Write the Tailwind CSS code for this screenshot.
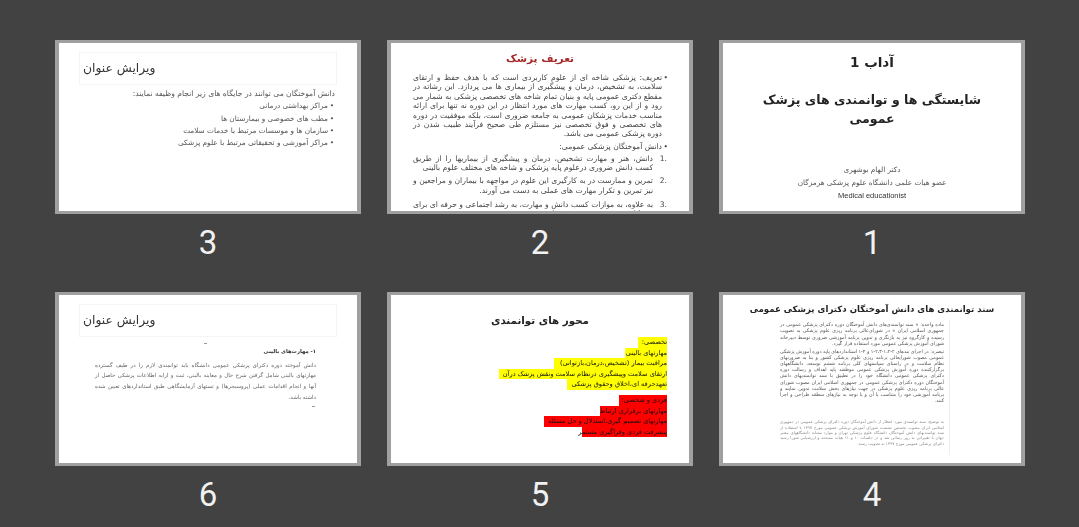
<!DOCTYPE html>
<html lang="fa">
<head>
<meta charset="utf-8">
<script src="https://cdn.jsdelivr.net/npm/@tailwindcss/browser@4"></script>
</head>
<body class="bg-[#424242] overflow-hidden font-['DejaVu_Sans',sans-serif]">
<div class="w-[1079px] h-[527px] pt-[40px] pl-[55px]">
  <div dir="rtl" class="grid grid-cols-[repeat(3,306px)] gap-x-[26px] w-[970px]">

    <!-- 1 -->
    <div class="flex flex-col">
      <div class="h-[174px] border-x-4 border-y-3 border-[#a0a0a0] bg-white overflow-hidden text-center">
        <div class="blur-[0.3px]">
          <div class="mt-[8px] text-[13.5px] font-bold leading-[22px] text-[#222]">آداب 1</div>
          <div class="mt-[17px] px-[30px] text-[12.5px] font-bold leading-[19px] text-[#222]">شایستگی ها و توانمندی های پزشک عمومی</div>
          <div class="mt-[36px] text-[7.3px] leading-[12.5px] text-[#555]">دکتر الهام بوشهری</div>
          <div class="text-[7.3px] leading-[12.5px] text-[#555]">عضو هیات علمی دانشگاه علوم پزشکی هرمزگان</div>
          <div class="text-[7.5px] leading-[13px] text-[#333] font-['Liberation_Sans',sans-serif]">Medical educationist</div>
        </div>
      </div>
      <div class="h-[78px] pt-[9px] text-center text-[33px] leading-[40px] text-[#f2f2f2] font-['Roboto',sans-serif]">1</div>
    </div>

    <!-- 2 -->
    <div class="flex flex-col">
      <div class="h-[174px] border-x-4 border-y-3 border-[#a0a0a0] bg-white overflow-hidden">
        <div class="blur-[0.3px]">
          <div class="mt-[5px] h-[20px] text-center text-[10.5px] font-bold leading-[20px] text-[#a62a2a]">تعریف پزشک</div>
          <div class="pr-[27px] pl-[22px] mt-[5px] text-[7.6px] leading-[9.4px] text-[#444]">
            <p class="relative text-justify"><span class="absolute right-[-6px]">•</span>تعریف: پزشکی شاخه ای از علوم کاربردی است که با هدف حفظ و ارتقای سلامت، به تشخیص، درمان و پیشگیری از بیماری ها می پردازد. این رشاته در مقطع دکتری عمومی پایه و بنیان تمام شاخه های تخصصی پزشکی به شمار می رود و از این رو، کسب مهارت های مورد انتظار در این دوره نه تنها برای ارائه مناسب خدمات پزشکان عمومی به جامعه ضروری است، بلکه موفقیت در دوره های تخصصی و فوق تخصصی نیز مستلزم طی صحیح فرآیند طبیب شدن در دوره پزشکی عمومی می باشد.</p>
            <p class="relative mt-[3.6px]"><span class="absolute right-[-6px]">•</span>دانش آموختگان پزشکی عمومی:</p>
            <p class="relative mt-[1.8px] mr-[9px] text-justify"><span dir="ltr" class="absolute right-[-14px]">1.</span>دانش، هنر و مهارت تشخیص، درمان و پیشگیری از بیماریها را از طریق کسب دانش ضروری درعلوم پایه پزشکی و شاخه های مختلف علوم بالینی</p>
            <p class="relative mt-[3.8px] mr-[9px] text-justify"><span dir="ltr" class="absolute right-[-14px]">2.</span>تمرین و ممارست در به کارگیری این علوم در مواجهه با بیماران و مراجعین و نیز تمرین و تکرار مهارت های عملی به دست می آورند.</p>
            <p class="relative mt-[4.6px] mr-[9px] text-justify"><span dir="ltr" class="absolute right-[-14px]">3.</span>به علاوه، به موازات کسب دانش و مهارت، به رشد اجتماعی و حرفه ای برای پزشکان عمومی نیز دست می یابند و</p>
          </div>
        </div>
      </div>
      <div class="h-[78px] pt-[9px] text-center text-[33px] leading-[40px] text-[#f2f2f2] font-['Roboto',sans-serif]">2</div>
    </div>

    <!-- 3 -->
    <div class="flex flex-col">
      <div class="h-[174px] border-x-4 border-y-3 border-[#a0a0a0] bg-white overflow-hidden">
        <div class="blur-[0.3px]">
          <div class="mt-[9px] mr-[20px] w-[258px] h-[33px] border border-[#f4f4f4] pl-[3px] flex items-center justify-end text-[12.3px] text-[#333]">ویرایش عنوان</div>
          <div class="mt-[3px] pr-[22px] text-[7.3px] leading-[12.3px] text-[#555]">
            <p class="text-[7.6px]">دانش آموختگان می توانند در جایگاه های زیر انجام وظیفه نمایند:</p>
            <p class="relative mr-[7px]"><span class="absolute right-[-6px]">•</span>مراکز بهداشتی درمانی</p>
            <p class="relative mr-[7px]"><span class="absolute right-[-6px]">•</span>مطب های خصوصی و بیمارستان ها</p>
            <p class="relative mr-[7px]"><span class="absolute right-[-6px]">•</span>سازمان ها و موسسات مرتبط با خدمات سلامت</p>
            <p class="relative mr-[7px]"><span class="absolute right-[-6px]">•</span>مراکز آموزشی و تحقیقاتی مرتبط با علوم پزشکی</p>
          </div>
        </div>
      </div>
      <div class="h-[78px] pt-[9px] text-center text-[33px] leading-[40px] text-[#f2f2f2] font-['Roboto',sans-serif]">3</div>
    </div>

    <!-- 4 -->
    <div class="flex flex-col">
      <div class="h-[174px] border-x-4 border-y-3 border-[#a0a0a0] bg-white overflow-hidden">
        <div class="blur-[0.3px]">
          <div class="mt-[6px] h-[16px] text-center text-[8.6px] font-bold leading-[16px] text-[#222] whitespace-nowrap">سند توانمندی های دانش آموختگان دکترای پزشکی عمومی</div>
        </div>
        <div class="mr-[71px] w-[170px] h-[135px] mt-[3px] border-r border-[#eeeeee] pr-[5px] blur-[0.5px] text-[4.8px] text-[#555]">
          <p class="pt-[2px] leading-[6.4px] text-justify">ماده واحده: « سند توانمندی‌های دانش آموختگان دوره دکترای پزشکی عمومی در جمهوری اسلامی ایران » در شورای‌عالی برنامه ریزی علوم پزشکی به تصویب رسیده و کارگروه نیز به بازنگری و تدوین برنامه آموزشی ضروری توسط دبیرخانه شورای آموزش پزشکی عمومی مورد استفاده قرار گیرد.</p>
          <p class="mt-[1px] leading-[6.2px] text-justify">تبصره: در اجرای بندهای ۲-۱،۲-۲،۳-۱ و ۴-۱ استانداردهای پایه دوره آموزش پزشکی عمومی مصوب شورایعالی برنامه ریزی علوم پزشکی کشور و بنا به ضرورتهای نظام سلامت و در راستای سیاستهای کلی برنامه ششم توسعه، دانشگاههای برگزارکننده دوره آموزش پزشکی عمومی موظفند پایه اهداف و رسالت دوره دکترای پزشکی عمومی دانشگاه خود را در تطبیق با سند توانمندیهای دانش آموختگان دوره دکترای پزشکی عمومی در جمهوری اسلامی ایران مصوب شورای عالی برنامه ریزی علوم پزشکی در جهت نیازهای بخش سلامت تدوین نمایند و برنامه آموزشی خود را متناسب با آن و با توجه به نیازهای منطقه طراحی و اجرا کنند.</p>
          <p class="mt-[15px] text-[4px] leading-[5.3px] text-justify text-[#888]">به توضیح: سند توانمندی مورد انتظار از دانش آموختگان دوره دکترای پزشکی عمومی در جمهوری اسلامی ایران مصوب نخستین نشست شورای آموزش پزشکی عمومی مورخ ۱۳۹۷ با استفاده از سند توانمندیهای دانش آموختگان دانشگاه علوم پزشکی تهران و موارد مشابه دانشگاههای معتبر جهان با تغییراتی به روز رسانی شد و در جلسات ۱۰ و ۱۱ هیات ممتحنه و ارزشیابی شورا رسید دکترای پزشکی عمومی مورخ ۱۳۹۷ به تصویب رسید.</p>
        </div>
      </div>
      <div class="h-[78px] pt-[9px] text-center text-[33px] leading-[40px] text-[#f2f2f2] font-['Roboto',sans-serif]">4</div>
    </div>

    <!-- 5 -->
    <div class="flex flex-col">
      <div class="h-[174px] border-x-4 border-y-3 border-[#a0a0a0] bg-white overflow-hidden">
        <div class="blur-[0.3px]">
          <div class="mt-[15px] h-[20px] text-center text-[10.3px] font-bold leading-[20px] text-[#222]">محور های توانمندی</div>
          <div class="mt-[7px] mr-[22px] flex flex-col items-start text-[6.6px] text-[#111]">
            <span class="h-[10.6px] leading-[10.6px] bg-[#ffff00] w-[29px] whitespace-nowrap">تخصصی:</span>
            <span class="h-[10.6px] leading-[10.6px] bg-[#ffff00] w-[42px] whitespace-nowrap">مهارتهای بالینی</span>
            <span class="h-[10.6px] leading-[10.6px] bg-[#ffff00] w-[113px] whitespace-nowrap">مراقبت بیمار (تشخیص،درمان،بازتوانی)</span>
            <span class="h-[10.6px] leading-[10.6px] bg-[#ffff00] w-[168px] whitespace-nowrap">ارتقای سلامت وپیشگیری درنظام سلامت ونقش پزشک درآن</span>
            <span class="h-[10.6px] leading-[10.6px] bg-[#ffff00] w-[100px] whitespace-nowrap">تعهدحرفه ای،اخلاق وحقوق پزشکی</span>
            <div class="h-[5px]"></div>
            <span class="h-[10.6px] leading-[10.6px] bg-[#ff0000] w-[48px] whitespace-nowrap">فردی و شخصی:</span>
            <span class="h-[10.6px] leading-[10.6px] bg-[#ff0000] w-[67px] whitespace-nowrap">مهارتهای برقراری ارتباط</span>
            <span class="h-[10.6px] leading-[10.6px] bg-[#ff0000] w-[123px] whitespace-nowrap">مهارتهای تصمیم گیری،استدلال و حل مسئله</span>
            <span class="h-[10.6px] leading-[10.6px] bg-[#ff0000] w-[85px] whitespace-nowrap">پیشرفت فردی وفراگیری مستمر</span>
          </div>
        </div>
      </div>
      <div class="h-[78px] pt-[9px] text-center text-[33px] leading-[40px] text-[#f2f2f2] font-['Roboto',sans-serif]">5</div>
    </div>

    <!-- 6 -->
    <div class="flex flex-col">
      <div class="h-[174px] border-x-4 border-y-3 border-[#a0a0a0] bg-white overflow-hidden">
        <div class="blur-[0.3px]">
          <div class="mt-[9px] mr-[20px] w-[258px] h-[33px] border border-[#f4f4f4] pl-[3px] flex items-center justify-end text-[12.3px] text-[#333]">ویرایش عنوان</div>
        </div>
        <div class="mt-[4px] mr-[41px] w-[221px] blur-[0.4px]">
          <div class="h-[5px] flex justify-center"><span class="mt-[2px] w-[3px] h-[1px] bg-[#999]"></span></div>
          <p class="text-[5.3px] font-bold leading-[10px] text-[#333]">۱- مهارت‌های بالینی</p>
          <p class="mt-[3.5px] text-[5.5px] leading-[10.8px] text-justify text-[#666]">دانش آموخته دوره دکترای پزشکی عمومی دانشگاه باید توانمندی لازم را در طیف گسترده مهارتهای بالینی شامل گرفتن شرح حال و معاینه بالینی، ثبت و ارایه اطلاعات پزشکی حاصل از آنها و انجام اقدامات عملی (پروسیجرها) و تستهای آزمایشگاهی طبق استانداردهای تعیین شده داشته باشد.</p>
          <div class="mt-[3px] w-[3px] h-[1px] bg-[#999] mr-[1px]"></div>
        </div>
      </div>
      <div class="h-[78px] pt-[9px] text-center text-[33px] leading-[40px] text-[#f2f2f2] font-['Roboto',sans-serif]">6</div>
    </div>

  </div>
</div>
</body>
</html>
